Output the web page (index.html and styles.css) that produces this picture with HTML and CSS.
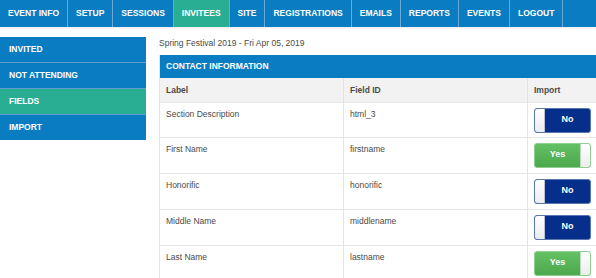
FILE: index.html
```html
<!DOCTYPE html>
<html>
<head>
  <title>Invitees - Fields</title>
  <link rel="stylesheet" href="styles.css">
</head>
<body>
  <div class="topnav">
    <a class="nav-item">Event Info</a>
    <a class="nav-item">Setup</a>
    <a class="nav-item">Sessions</a>
    <a class="nav-item active">Invitees</a>
    <a class="nav-item">Site</a>
    <a class="nav-item">Registrations</a>
    <a class="nav-item">Emails</a>
    <a class="nav-item">Reports</a>
    <a class="nav-item">Events</a>
    <a class="nav-item">Logout</a>
  </div>

  <div class="page">
    <div class="sidebar">
      <a class="side-item">Invited</a>
      <a class="side-item">Not Attending</a>
      <a class="side-item active">Fields</a>
      <a class="side-item">Import</a>
    </div>

    <div class="main">
      <div class="event-title">Spring Festival 2019 - Fri Apr 05, 2019</div>

      <div class="panel">
        <div class="panel-header">Contact Information</div>
        <table class="fields">
          <tr>
            <th class="col-label">Label</th>
            <th class="col-id">Field ID</th>
            <th class="col-import">Import</th>
          </tr>
          <tr>
            <td>Section Description</td>
            <td>html_3</td>
            <td><div class="toggle off"><span class="knob"></span><span class="toggle-text">No</span></div></td>
          </tr>
          <tr>
            <td>First Name</td>
            <td>firstname</td>
            <td><div class="toggle on"><span class="toggle-text">Yes</span><span class="knob"></span></div></td>
          </tr>
          <tr>
            <td>Honorific</td>
            <td>honorific</td>
            <td><div class="toggle off"><span class="knob"></span><span class="toggle-text">No</span></div></td>
          </tr>
          <tr>
            <td>Middle Name</td>
            <td>middlename</td>
            <td><div class="toggle off"><span class="knob"></span><span class="toggle-text">No</span></div></td>
          </tr>
          <tr>
            <td>Last Name</td>
            <td>lastname</td>
            <td><div class="toggle on"><span class="toggle-text">Yes</span><span class="knob"></span></div></td>
          </tr>
        </table>
      </div>
    </div>
  </div>
</body>
</html>
```

FILE: styles.css
```css
body {
  margin: 0;
  font-family: "Liberation Sans", Arial, sans-serif;
  font-size: 8.5px;
  color: #4a4a4a;
  background-color: #fff;
  overflow: hidden;
}

.topnav {
  display: flex;
  height: 27px;
  background-color: #0a7cc1;
  box-shadow: 0 2px 2px rgba(0, 0, 0, 0.06);
}

.nav-item {
  padding: 0 8px;
  line-height: 27px;
  color: #fff;
  font-weight: bold;
  text-transform: uppercase;
  border-right: 1px solid #6aa9d6;
  white-space: nowrap;
}

.nav-item.active {
  background-color: #2aae93;
}

.page {
  display: flex;
  padding-top: 10px;
}

.sidebar {
  width: 146px;
  flex-shrink: 0;
  align-self: flex-start;
  background-color: #0a7cc1;
}

.side-item {
  display: block;
  height: 25px;
  line-height: 25px;
  padding-left: 9px;
  color: #fff;
  font-weight: bold;
  text-transform: uppercase;
  border-bottom: 1px solid #5e9fcf;
}

.side-item:last-child {
  border-bottom: none;
}

.side-item.active {
  background-color: #2aae93;
}

.main {
  margin-left: 13px;
  flex-shrink: 0;
}

.event-title {
  height: 18px;
  line-height: 12px;
}

.panel {
  width: 450px;
  border: 1px solid #e3e3e3;
  border-top: none;
}

.panel-header {
  height: 23px;
  line-height: 23px;
  padding-left: 6px;
  background-color: #0a7cc1;
  color: #fff;
  font-weight: bold;
  text-transform: uppercase;
}

.fields {
  width: 100%;
  border-collapse: collapse;
}

.fields th {
  height: 24px;
  padding: 0 6px;
  text-align: left;
  font-weight: bold;
  background-color: #f2f2f2;
  border-left: 1px solid #e3e3e3;
}

.fields td {
  height: 36px;
  padding: 5px 6px 0 6px;
  vertical-align: top;
  line-height: 12px;
  border-top: 1px solid #e6e6e6;
  border-left: 1px solid #e3e3e3;
  box-sizing: border-box;
}

.fields tr:nth-child(2) td {
  height: 35px;
}

.fields th:first-child,
.fields td:first-child {
  border-left: none;
}

.col-label {
  width: 171px;
}

.col-id {
  width: 171px;
}

.toggle {
  display: flex;
  width: 57px;
  height: 25px;
  border-radius: 3px;
  overflow: hidden;
  box-sizing: border-box;
  color: #fff;
  font-weight: bold;
  font-size: 9px;
}

.toggle.off {
  background-color: #052f8a;
  border: 1px solid #5a78b0;
}

.toggle.on {
  background: linear-gradient(#63c063, #4da84d);
  border: 1px solid #8fcf8f;
}

.knob {
  width: 9px;
  background: linear-gradient(#ffffff, #ececec);
}

.toggle.off .knob {
  border-right: 1px solid #b8c3d8;
}

.toggle.on .knob {
  border-left: 1px solid #b8dcb8;
}

.toggle-text {
  flex: 1;
  text-align: center;
  line-height: 21px;
}
```
